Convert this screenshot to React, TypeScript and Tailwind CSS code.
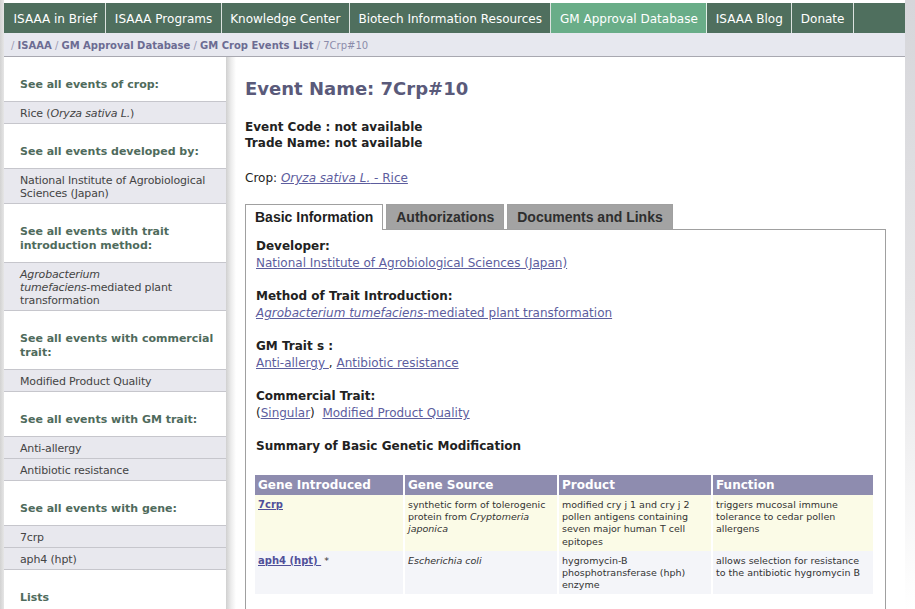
import React from "react";

const navItems = [
  "ISAAA in Brief",
  "ISAAA Programs",
  "Knowledge Center",
  "Biotech Information Resources",
  "GM Approval Database",
  "ISAAA Blog",
  "Donate",
];

const Nav = () => (
  <div className="mt-[3px] flex h-[30px] bg-[#4f6f5e] pl-px">
    {navItems.map((n) => (
      <div
        key={n}
        className={
          n === "GM Approval Database"
            ? "flex items-center border-r border-white/80 bg-[#69ad88] px-[8.5px] pt-px text-[12px] text-white"
            : "flex items-center border-r border-white/80 px-[8.5px] pt-px text-[12px] text-white"
        }
      >
        {n}
      </div>
    ))}
  </div>
);

const Breadcrumb = () => (
  <div className="flex h-[24px] items-center border-b border-[#a8a8b0] bg-[#e7e8ef] px-[7px] pt-px text-[10px] text-[#9a9ab4]">
    <span>/&nbsp;</span>
    <span className="font-bold text-[#6c6c93]">ISAAA</span>
    <span>&nbsp;/&nbsp;</span>
    <span className="font-bold text-[#6c6c93]">GM Approval Database</span>
    <span>&nbsp;/&nbsp;</span>
    <span className="font-bold text-[#6c6c93]">GM Crop Events List</span>
    <span>&nbsp;/&nbsp;</span>
    <span className="text-[#8c8cab]">7Crp#10</span>
  </div>
);

const SideHead = ({ children }: { children: React.ReactNode }) => (
  <div className="pb-[9px] pl-[16px] pr-[8px] pt-[21px] text-[11px] font-bold leading-[14px] text-[#4f6b5c]">
    {children}
  </div>
);

const SideRows = ({ rows }: { rows: React.ReactNode[] }) => (
  <div className="border-t border-[#c6c6cc]">
    {rows.map((r, i) => (
      <div
        key={i}
        className="border-b border-[#c6c6cc] bg-[#e8e8ee] pb-[3px] pl-[16px] pr-[8px] pt-[5px] text-[11px] leading-[13px] tracking-[-0.15px] text-[#444]"
      >
        {r}
      </div>
    ))}
  </div>
);

const Sidebar = () => (
  <div className="w-[222px] shrink-0">
    <SideHead>See all events of crop:</SideHead>
    <SideRows
      rows={[
        <>
          Rice (<i>Oryza sativa L.</i>)
        </>,
      ]}
    />
    <SideHead>See all events developed by:</SideHead>
    <SideRows rows={["National Institute of Agrobiological Sciences (Japan)"]} />
    <SideHead>
      See all events with trait
      <br />
      introduction method:
    </SideHead>
    <SideRows
      rows={[
        <>
          <i>Agrobacterium</i>
          <br />
          <i>tumefaciens</i>-mediated plant
          <br />
          transformation
        </>,
      ]}
    />
    <SideHead>
      See all events with commercial
      <br />
      trait:
    </SideHead>
    <SideRows rows={["Modified Product Quality"]} />
    <SideHead>See all events with GM trait:</SideHead>
    <SideRows rows={["Anti-allergy", "Antibiotic resistance"]} />
    <SideHead>See all events with gene:</SideHead>
    <SideRows rows={["7crp", "aph4 (hpt)"]} />
    <SideHead>Lists</SideHead>
  </div>
);

const linkCls = "text-[#5d5d9e] underline";

const Block = ({ label, children }: { label: string; children: React.ReactNode }) => (
  <div className="mb-[16px] text-[12px] leading-[17px]">
    <div className="font-bold text-[#222]">{label}</div>
    <div className="text-[#222]">{children}</div>
  </div>
);

const cell = "px-[3px] pb-[3px] pt-[4px]";

const GeneTable = () => (
  <table className="-ml-[3px] w-[622px] table-fixed border-separate border-spacing-x-[2px] border-spacing-y-0 text-[9.5px] text-[#333]">
    <colgroup>
      <col className="w-[148px]" />
      <col className="w-[152px]" />
      <col className="w-[152px]" />
      <col />
    </colgroup>
    <thead>
      <tr className="bg-[#8e8caf] text-left text-[12px] font-bold leading-[20px] text-white">
        <th className="px-[3px]">Gene Introduced</th>
        <th className="px-[3px]">Gene Source</th>
        <th className="px-[3px]">Product</th>
        <th className="px-[3px]">Function</th>
      </tr>
    </thead>
    <tbody className="align-top leading-[12.2px]">
      <tr className="bg-[#fbfbe7]">
        <td className={cell}>
          <span className="text-[10px] font-bold text-[#50509a] underline">7crp</span>
        </td>
        <td className={cell}>
          synthetic form of tolerogenic protein from <i>Cryptomeria japonica</i>
        </td>
        <td className={cell}>
          modified cry j 1 and cry j 2 pollen antigens containing seven major human T cell epitopes
        </td>
        <td className={cell}>triggers mucosal immune tolerance to cedar pollen allergens</td>
      </tr>
      <tr className="bg-[#f4f5f9]">
        <td className={cell}>
          <span className="text-[10px] font-bold text-[#50509a] underline">aph4 (hpt)&nbsp;</span>
          &nbsp;*
        </td>
        <td className={cell}>
          <i>Escherichia coli</i>
        </td>
        <td className={cell}>hygromycin-B phosphotransferase (hph) enzyme</td>
        <td className={cell}>allows selection for resistance to the antibiotic hygromycin B</td>
      </tr>
    </tbody>
  </table>
);

const Tabs = () => (
  <div className="flex gap-[3px] font-['Liberation_Sans',Arial,sans-serif] text-[14px] font-bold">
    <div className="relative z-10 -mb-px flex h-[26px] items-center border border-b-0 border-[#a0a0a0] bg-white px-[9px] text-[#1e1e1e]">
      Basic Information
    </div>
    <div className="flex h-[25px] items-center border border-b-0 border-[#a0a0a0] bg-[#a3a3a3] px-[9px] text-[#2e2e2e]">
      Authorizations
    </div>
    <div className="flex h-[25px] items-center border border-b-0 border-[#a0a0a0] bg-[#a3a3a3] px-[9px] text-[#2e2e2e]">
      Documents and Links
    </div>
  </div>
);

const Main = () => (
  <div className="flex-1 pl-[9px] pt-[21px]">
    <h1 className="text-[18px] font-bold leading-[22px] text-[#5a5a7a]">Event Name: 7Crp#10</h1>
    <div className="mt-[19px] text-[12px] font-bold leading-[16px] text-[#222]">
      <div>Event Code : not available</div>
      <div>Trade Name: not available</div>
    </div>
    <div className="mt-[19px] text-[12px] leading-[16px] text-[#222]">
      Crop:{" "}
      <span className={linkCls}>
        <i>Oryza sativa L.</i> - Rice
      </span>
    </div>
    <div className="mt-[18px]">
      <Tabs />
      <div className="mr-[21px] h-[400px] border border-b-0 border-[#a0a0a0] px-[10px] pt-[8px]">
        <Block label="Developer:">
          <span className={linkCls}>National Institute of Agrobiological Sciences (Japan)</span>
        </Block>
        <Block label="Method of Trait Introduction:">
          <span className={linkCls}>
            <i>Agrobacterium tumefaciens</i>-mediated plant transformation
          </span>
        </Block>
        <Block label="GM Trait s :">
          <span className={linkCls}>Anti-allergy </span> ,{" "}
          <span className={linkCls}>Antibiotic resistance</span>
        </Block>
        <Block label="Commercial Trait:">
          (<span className={linkCls}>Singular</span>)&nbsp;{" "}
          <span className={linkCls}>Modified Product Quality</span>
        </Block>
        <div className="text-[12px] font-bold leading-[17px] text-[#222]">
          Summary of Basic Genetic Modification
        </div>
        <div className="mt-[20px]">
          <GeneTable />
        </div>
      </div>
    </div>
  </div>
);

export default function App() {
  return (
    <div className="flex h-[609px] w-full overflow-hidden bg-white font-['DejaVu_Sans',Verdana,sans-serif]">
      <div className="w-[4px] shrink-0 bg-gradient-to-r from-[#d2d2d2] to-[#e6e6e6]" />
      <div className="w-[901px] shrink-0">
        <Nav />
        <Breadcrumb />
        <div className="flex">
          <Sidebar />
          <div className="w-[10px] shrink-0 bg-gradient-to-r from-[#d0d0d0] via-[#ececec] to-white" />
          <Main />
        </div>
      </div>
      <div className="flex-1 bg-gradient-to-b from-[#d6d6da] via-[#e4e4e6] to-white" />
    </div>
  );
}
